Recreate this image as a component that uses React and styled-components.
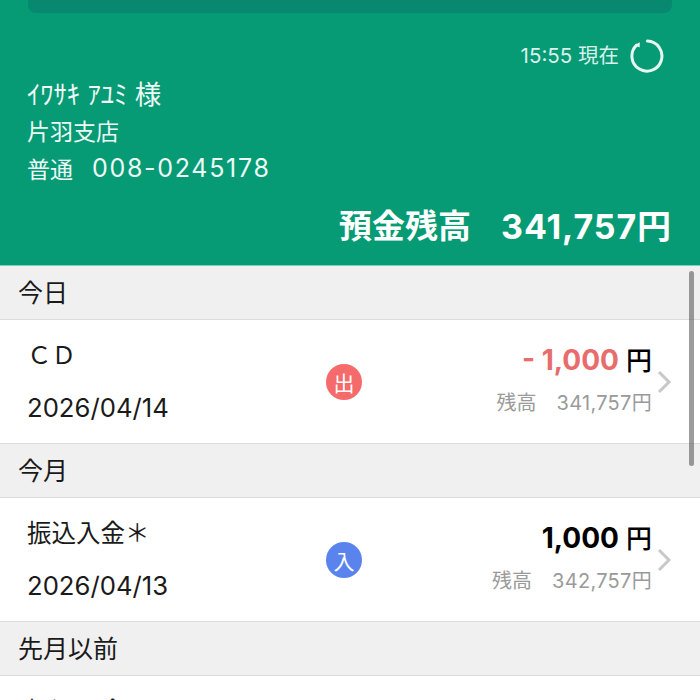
import React from 'react';
import styled, { createGlobalStyle } from 'styled-components';

const GlobalStyle = createGlobalStyle`
  html, body {
    margin: 0;
    padding: 0;
    background: #fff;
  }
  body {
    font-family: 'Inter', 'Liberation Sans', 'Noto Sans CJK JP', sans-serif;
  }
`;

const Screen = styled.div`
  position: relative;
  width: 700px;
  height: 700px;
  overflow: hidden;
  background: #fff;
`;

const Header = styled.header`
  height: 266px;
  box-sizing: border-box;
  padding: 0 28px;
  background: #069b75;
  border-bottom: 1px solid #79d3bb;
  color: #fff;
`;

const TopCard = styled.div`
  height: 13px;
  background: #08896f;
  border-radius: 0 0 8px 8px;
`;

const UpdatedRow = styled.div`
  display: flex;
  justify-content: flex-end;
  align-items: center;
  gap: 10px;
  height: 36px;
  margin-top: 25px;
  padding-right: 7px;
  font-size: 20.5px;
  color: #d9f1ea;
`;

const UpdatedText = styled.span`
  position: relative;
  top: -2px;
`;

const AccountLine = styled.div`
  display: flex;
  gap: 19px;
  height: 38px;
  margin-left: -1px;
  align-items: center;
  font-size: 23px;
  color: #eef9f6;
`;

const NameLine = styled(AccountLine)`
  height: 36px;
  margin-top: 0;
  margin-bottom: 1px;
  font-size: 26.5px;
`;

const AccountNumber = styled.span`
  font-size: 25px;
  letter-spacing: 1.7px;
`;

const BalanceRow = styled.div`
  display: flex;
  justify-content: flex-end;
  align-items: center;
  gap: 30px;
  height: 44px;
  margin-top: 15px;
  font-size: 33px;
  font-weight: 700;
`;

const BalanceValue = styled.span`
  font-size: 34px;
  letter-spacing: 0.9px;
`;

const SectionHead = styled.div`
  height: 54px;
  box-sizing: border-box;
  padding: 0 18px 3px;
  display: flex;
  align-items: center;
  background: #f0f0f0;
  border-bottom: 1px solid #dcdcdc;
  font-size: 25px;
  color: #1a1a1a;
`;

const Row = styled.div`
  height: 124px;
  box-sizing: border-box;
  padding: 0 29px 0 27px;
  display: grid;
  grid-template-columns: 299px 36px 1fr 19px;
  align-items: center;
  background: #fff;
  border-bottom: 1px solid #dcdcdc;
`;

const LeftCol = styled.div`
  display: flex;
  flex-direction: column;
  gap: 23px;
  color: #1a1a1a;
`;

const RowTitle = styled.div`
  font-size: 24.5px;
  height: 30px;
  line-height: 30px;
`;

const RowDate = styled.div`
  font-size: 25.7px;
  height: 30px;
  line-height: 30px;
`;

const Badge = styled.div`
  width: 36px;
  height: 36px;
  border-radius: 50%;
  display: flex;
  align-items: center;
  justify-content: center;
  background: ${(p) => p.$color};
  color: #fff;
  font-size: 21px;
`;

const RightCol = styled.div`
  display: flex;
  flex-direction: column;
  align-items: flex-end;
  gap: 11px;
  padding: 0 0 8px 0;
`;

const Amount = styled.div`
  display: flex;
  align-items: baseline;
  gap: 7px;
  height: 36px;
  font-size: 28px;
  font-weight: 700;
  color: ${(p) => p.$color};
`;

const Yen = styled.span`
  font-size: 26px;
  font-weight: 500;
  color: #000;
`;

const Remaining = styled.div`
  display: flex;
  gap: 20px;
  font-size: 20px;
  color: #9a9a9a;
`;

const RemainingValue = styled.span`
  letter-spacing: 0.3px;
`;

const Chevron = styled.svg`
  justify-self: end;
  width: 16px;
  height: 26px;
  margin-right: -1px;
`;

const ScrollThumb = styled.div`
  position: absolute;
  top: 271px;
  right: 6px;
  width: 5px;
  height: 195px;
  border-radius: 3px;
  background: rgba(90, 90, 90, 0.6);
`;

const RefreshIcon = () => (
  <svg width="36" height="36" viewBox="0 0 36 36" fill="none">
    <path
      d="M18.5 3.1A15 15 0 1 1 7.6 7.2"
      stroke="#e6f6f1"
      strokeWidth="3"
      strokeLinecap="round"
    />
    <path d="M5.6 7.2L10.8 4.2l-0.2 5.4z" fill="#e6f6f1" />
  </svg>
);

const ChevronIcon = () => (
  <Chevron viewBox="0 0 16 26" fill="none">
    <path d="M3 3l10 10L3 23" stroke="#c8c8c8" strokeWidth="3" />
  </Chevron>
);

const transactions = {
  today: {
    title: 'ＣＤ',
    date: '2026/04/14',
    badge: '出',
    badgeColor: '#f56a6a',
    amount: '- 1,000',
    amountColor: '#e96c6c',
    balance: '341,757',
  },
  month: {
    title: '振込入金＊',
    date: '2026/04/13',
    badge: '入',
    badgeColor: '#5b83ee',
    amount: '1,000',
    amountColor: '#000',
    balance: '342,757',
  },
  older: {
    title: '振込入金＊',
    date: '2026/03/31',
    badge: '入',
    badgeColor: '#5b83ee',
    amount: '2,000',
    amountColor: '#000',
    balance: '341,757',
  },
};

const TransactionRow = ({ item }) => (
  <Row>
    <LeftCol>
      <RowTitle>{item.title}</RowTitle>
      <RowDate>{item.date}</RowDate>
    </LeftCol>
    <Badge $color={item.badgeColor}>{item.badge}</Badge>
    <RightCol>
      <Amount $color={item.amountColor}>
        {item.amount}
        <Yen>円</Yen>
      </Amount>
      <Remaining>
        <span>残高</span>
        <RemainingValue>{item.balance}円</RemainingValue>
      </Remaining>
    </RightCol>
    <ChevronIcon />
  </Row>
);

const App = () => {
  return (
    <>
      <GlobalStyle />
      <Screen>
        <Header>
          <TopCard />
          <UpdatedRow>
            <UpdatedText>15:55 現在</UpdatedText>
            <RefreshIcon />
          </UpdatedRow>
          <NameLine>ｲﾜｻｷ ｱﾕﾐ 様</NameLine>
          <AccountLine>片羽支店</AccountLine>
          <AccountLine>
            <span>普通</span>
            <AccountNumber>008-0245178</AccountNumber>
          </AccountLine>
          <BalanceRow>
            <span>預金残高</span>
            <BalanceValue>341,757円</BalanceValue>
          </BalanceRow>
        </Header>
        <SectionHead>今日</SectionHead>
        <TransactionRow item={transactions.today} />
        <SectionHead>今月</SectionHead>
        <TransactionRow item={transactions.month} />
        <SectionHead>先月以前</SectionHead>
        <TransactionRow item={transactions.older} />
        <ScrollThumb />
      </Screen>
    </>
  );
};

export default App;
